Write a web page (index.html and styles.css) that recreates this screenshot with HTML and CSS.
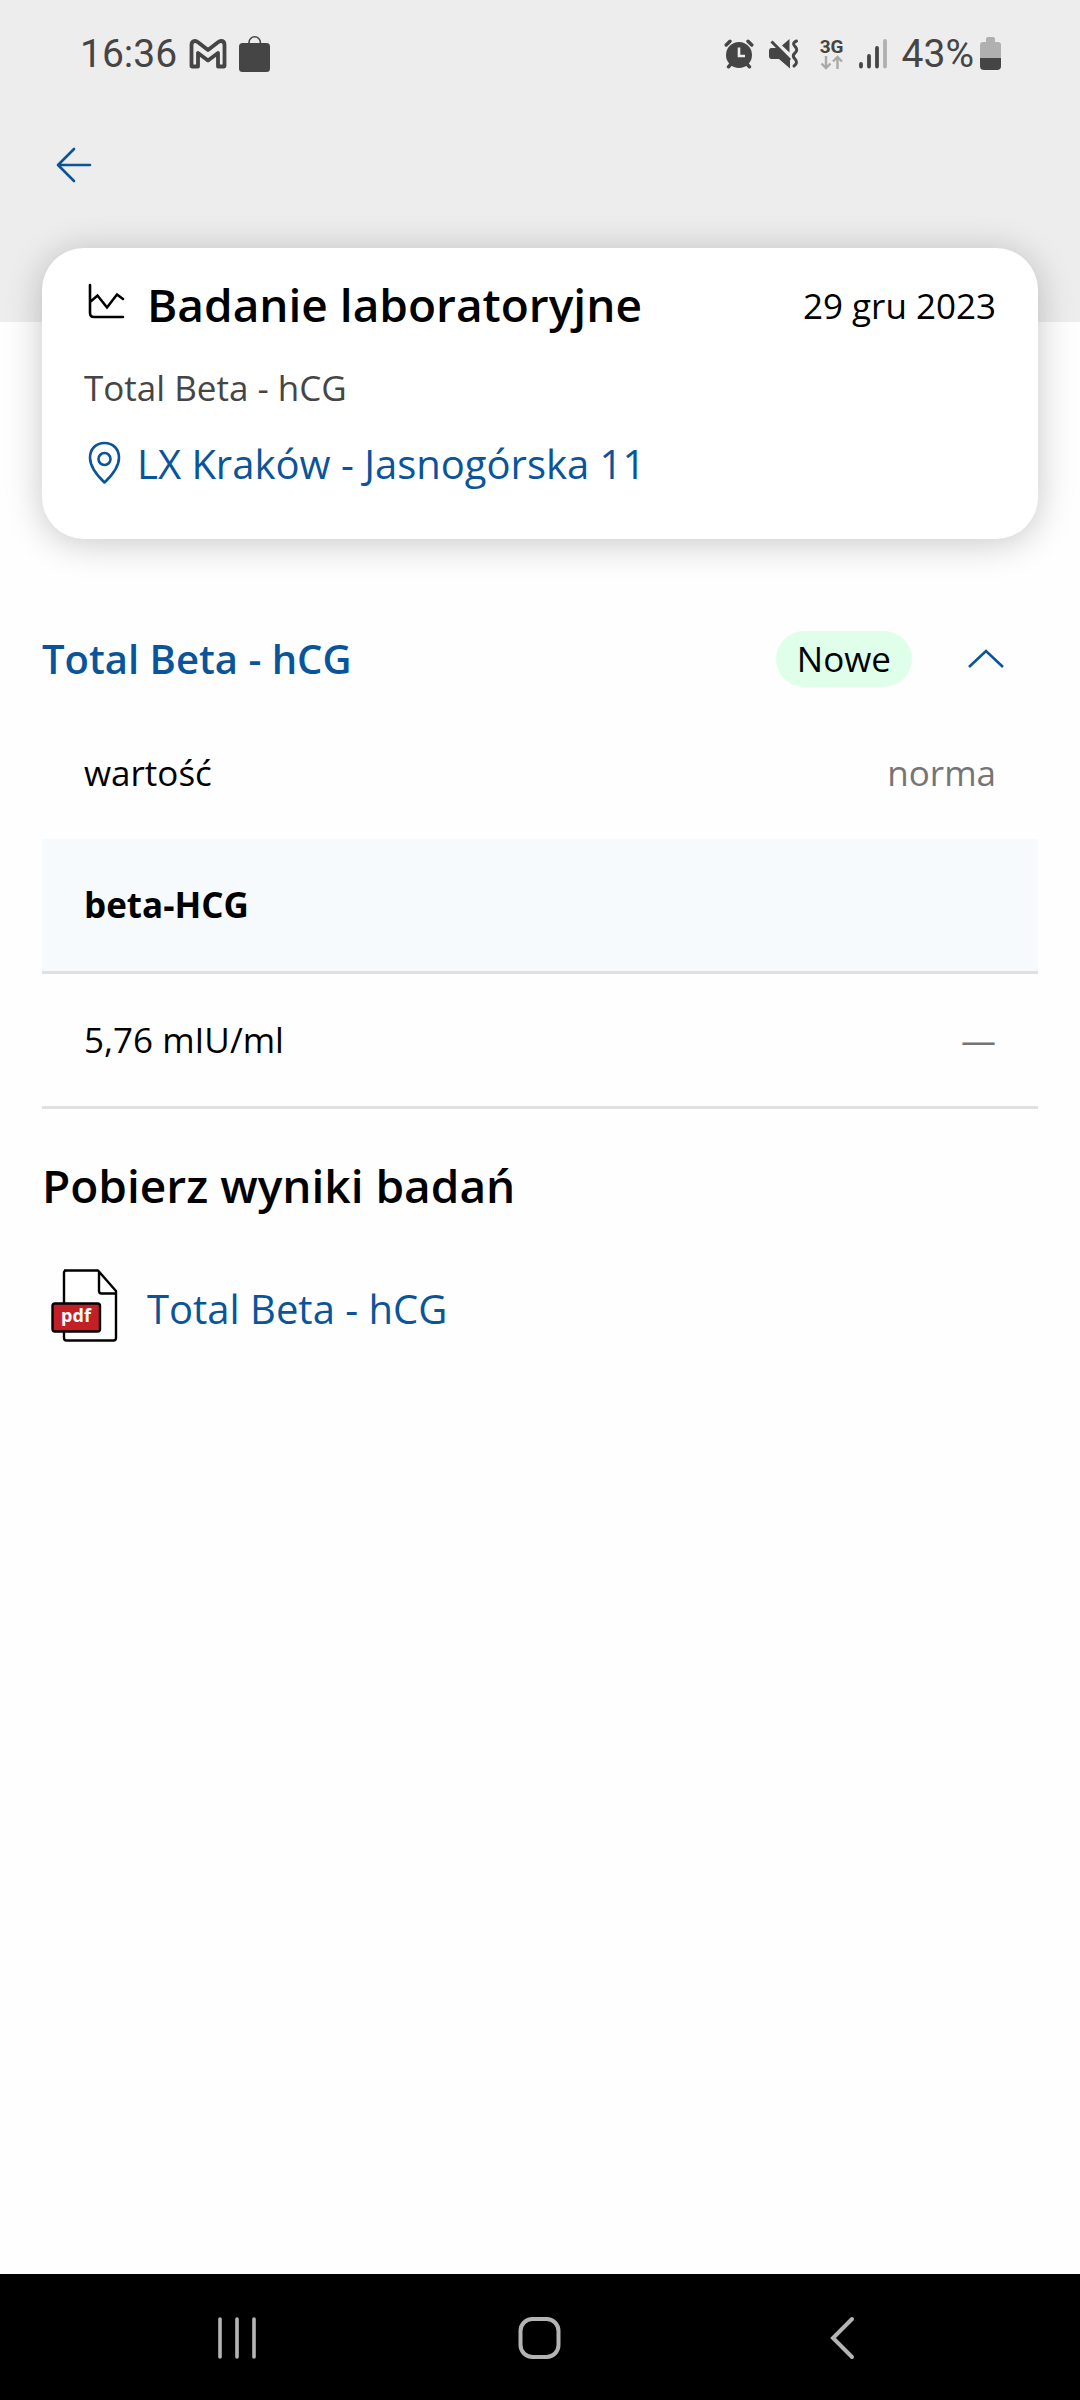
FILE: index.html
```html
<!DOCTYPE html>
<html lang="pl">
<head>
<meta charset="utf-8">
<meta name="viewport" content="width=device-width, initial-scale=1">
<title>Badanie laboratoryjne</title>
<link rel="stylesheet" href="styles.css">
</head>
<body>
<header class="top">
  <div class="status">
    <div class="status-left">
      <span class="status-text">16:36</span>
      <svg class="gmail" width="38" height="30" viewBox="0 0 38 30" aria-hidden="true"><path d="M2.500 27V6Q2.500 2 6 2Q7.500 2 9 3.200L19 11L29 3.200Q30.500 2 32 2Q35.500 2 35.500 6V27Q35.500 27.500 35 27.500H29V14L19 21.500L9 14V27.500H3Q2.500 27.500 2.500 27Z" fill="none" stroke="#454545" stroke-width="3.800" stroke-linejoin="round"/></svg>
      <svg width="32" height="36" viewBox="0 0 32 36" aria-hidden="true"><rect x="0" y="7" width="31" height="29" rx="3.500" fill="#454545"/><path d="M10 8V6.500a5.700 5.700 0 0 1 11.400 0V8" fill="none" stroke="#454545" stroke-width="1.600"/></svg>
    </div>
    <div class="status-right">
      <svg width="30" height="30" viewBox="0 0 30 30" aria-hidden="true"><g fill="none" stroke="#454545" stroke-width="3.400" stroke-linecap="round"><path d="M2.200 6L6 2.200M24 2.200L27.800 6M7 25L4.500 27.800M23 25L25.500 27.800"/></g><circle cx="15" cy="16" r="13" fill="#454545"/><path d="M15 8.500V17H21" fill="none" stroke="#ededed" stroke-width="2.600"/></svg>
      <svg width="30" height="30" viewBox="0 0 30 30" aria-hidden="true"><g fill="#454545"><path d="M13 6.500L20.500 0V13.500Z"/><path d="M2.500 9H8L21 21.500V29.500L10 20H2.500Q0 20 0 17V12Q0 9 2.500 9Z"/></g><path d="M2.500 2.500L21 21" stroke="#454545" stroke-width="3" fill="none"/><path d="M27.500 2Q22.500 4 26 7.500Q29.500 10.500 26 14Q22.500 17 26 20Q29.500 23.500 25 27" fill="none" stroke="#454545" stroke-width="3" stroke-linecap="round"/></svg>
      <span class="network">3G
        <svg width="24" height="15" viewBox="0 0 24 15" aria-hidden="true"><path d="M6 1V13M1.500 8.500L6 13L10.500 8.500M17.500 14V2M13 6.500L17.500 2L22 6.500" fill="none" stroke="#a9a9a9" stroke-width="2.400"/></svg>
      </span>
      <svg width="28" height="30" viewBox="0 0 28 30" aria-hidden="true"><g fill="none" stroke="#454545" stroke-width="3.800" stroke-linecap="round"><path d="M2 25V27.500M10 17V27.500M18 9V27.500"/><path d="M26 2V27.500" stroke="#b0b0b0"/></g></svg>
      <span class="status-text battery">43%
        <svg width="22" height="34" viewBox="0 0 22 34" aria-hidden="true"><path d="M0 21V8Q0 5 3 5H6V2Q6 0 8 0H13Q15 0 15 2V5H18Q21 5 21 8V21Z" fill="#b0b0b0"/><path d="M0 21H21V29Q21 33 17 33H4Q0 33 0 29Z" fill="#454545"/></svg>
      </span>
    </div>
  </div>
  <button class="back" type="button" aria-label="Wstecz">
    <svg width="36" height="36" viewBox="0 0 36 36" aria-hidden="true"><path d="M34 18H2M18 2L2 18L18 34" fill="none" stroke="#0a5599" stroke-width="2.600" stroke-linecap="round" stroke-linejoin="round"/></svg>
  </button>
</header>

<main class="content">
  <section class="card">
    <div class="card-head">
      <svg class="chart" width="42" height="42" viewBox="0 0 42 42" aria-hidden="true"><path d="M6 2V30Q6 34 10 34H39M6 19L13.500 12.500L23 24.500L33 11.500L39 16" fill="none" stroke="#000" stroke-width="2.600" stroke-linecap="round"/></svg>
      <h1 class="title">Badanie laboratoryjne</h1>
      <time class="date" datetime="2023-12-29">29 gru 2023</time>
    </div>
    <p class="exam">Total Beta - hCG</p>
    <a class="place" href="#">
      <svg width="42" height="48" viewBox="0 0 42 48" aria-hidden="true"><path d="M20.500 3C11.500 3 6 9.500 6 17.500C6 26 12 34.500 20.500 42.500C29 34.500 35 26 35 17.500C35 9.500 29.500 3 20.500 3Z" fill="none" stroke="#0a5599" stroke-width="2.600" stroke-linejoin="round"/><circle cx="20.500" cy="19" r="6" fill="none" stroke="#0a5599" stroke-width="2.600"/></svg>
      <span>LX Kraków - Jasnogórska 11</span>
    </a>
  </section>

  <section class="results">
    <h2 class="accordion">
      <button class="toggle" type="button" aria-expanded="true">
        <span class="toggle-name">Total Beta - hCG</span>
        <span class="badge">Nowe</span>
        <svg width="36" height="20" viewBox="0 0 36 20" aria-hidden="true"><path d="M1 18L18 2L35 18" fill="none" stroke="#0a5599" stroke-width="2.600"/></svg>
      </button>
    </h2>
    <table class="table">
      <thead>
        <tr><th scope="col">wartość</th><th scope="col" class="norm">norma</th></tr>
      </thead>
      <tbody>
        <tr class="group"><th scope="rowgroup" colspan="2">beta-HCG</th></tr>
        <tr><td>5,76 mIU/ml</td><td class="norm">—</td></tr>
      </tbody>
    </table>
  </section>

  <section class="downloads">
    <h2 class="title">Pobierz wyniki badań</h2>
    <a class="file" href="#">
      <svg width="84" height="80" viewBox="0 0 84 80" aria-hidden="true"><path d="M22 1.500H56L74 22V69Q74 71.500 71.500 71.500H24.500Q22 71.500 22 69V4Q22 1.500 24.500 1.500M57 2V22Q57 24.500 59.500 24.500H74" fill="#fff" stroke="#000" stroke-width="2.400" stroke-linejoin="round"/><rect x="10.500" y="34.500" width="47.500" height="28" rx="2.500" fill="#c22026" stroke="#000" stroke-width="2.400"/><text class="pdf" x="34" y="53" text-anchor="middle">pdf</text></svg>
      <span>Total Beta - hCG</span>
    </a>
  </section>
</main>

<nav class="navbar" aria-label="System">
  <button type="button" aria-label="Ostatnie"><svg width="44" height="44" viewBox="0 0 44 44" aria-hidden="true"><path d="M5 3V41M22 3V41M39 3V41" stroke="#b4b4b4" stroke-width="3.600" stroke-linecap="round"/></svg></button>
  <button type="button" aria-label="Ekran główny"><svg width="44" height="44" viewBox="0 0 44 44" aria-hidden="true"><rect x="2.500" y="3" width="38" height="38" rx="12" fill="none" stroke="#b4b4b4" stroke-width="4"/></svg></button>
  <button type="button" aria-label="Wstecz"><svg width="44" height="44" viewBox="0 0 44 44" aria-hidden="true"><path d="M31 3L12 22L31 41" fill="none" stroke="#b4b4b4" stroke-width="4" stroke-linecap="round"/></svg></button>
</nav>
</body>
</html>
```

FILE: styles.css
```css
* {
  box-sizing: border-box;
}

body {
  margin: 0;
  min-height: 100vh;
  display: flex;
  flex-direction: column;
  background: #fefefe;
  color: #000;
  font: 35px/48px "Open Sans", "Noto Sans", sans-serif;
}

h1, h2, p {
  margin: 0;
}

svg {
  display: block;
  flex: none;
}

a {
  color: #0a5599;
  text-decoration: none;
}

button {
  padding: 0;
  border: 0;
  background: none;
  font: inherit;
  color: inherit;
  cursor: pointer;
}

/* Grey header with the system status row */
.top {
  background: #ededed;
  padding-bottom: 100px;
}

.status {
  display: flex;
  justify-content: space-between;
  align-items: center;
  height: 108px;
  padding: 0 78px 0 80px;
}

.status-left,
.status-right {
  display: flex;
  align-items: center;
  gap: 15px;
  color: #454545;
}

.status-left {
  gap: 12px;
}

.status-text {
  font: 39px/48px Roboto, sans-serif;
}

.battery {
  display: flex;
  align-items: center;
  gap: 6px;
}

.network {
  display: flex;
  flex-direction: column;
  align-items: center;
  width: 24px;
  margin-left: 6px;
  font: bold 19px/17px Roboto, sans-serif;
}

.back {
  display: flex;
  align-items: center;
  height: 114px;
  padding: 0 56px;
}

/* Page body */
.content {
  flex: 1;
  margin-top: -74px;
  padding: 0 42px 48px;
}

.card {
  padding: 26px 42px 47px;
  border-radius: 42px;
  background: #fff;
  box-shadow: 0 4px 36px rgba(0, 0, 0, 0.22);
}

.card-head {
  display: flex;
  align-items: flex-end;
  margin-bottom: 30px;
}

.chart {
  align-self: center;
  margin-right: 21px;
}

.title {
  font-size: 46px;
  line-height: 60px;
  font-weight: 600;
}

.date {
  margin-left: auto;
  line-height: 56px;
}

.exam {
  margin-bottom: 24px;
  color: #454545;
}

.place,
.file {
  display: flex;
  align-items: center;
  font-size: 40px;
  line-height: 56px;
}

.place {
  gap: 11px;
}

.results {
  margin-top: 92px;
}

.accordion {
  font-size: 40px;
  line-height: 56px;
  font-weight: 600;
}

.toggle {
  display: flex;
  align-items: center;
  width: 100%;
  padding-right: 34px;
  text-align: left;
}

.toggle-name {
  flex: 1;
  color: #0a5599;
}

.badge {
  margin-right: 56px;
  padding: 0 21px;
  border-radius: 28px;
  background: #e0ffeb;
  font-size: 35px;
  font-weight: 400;
}

.table {
  width: 100%;
  border-collapse: separate;
  border-spacing: 0;
}

.table th,
.table td {
  padding: 42px;
  text-align: left;
  font-weight: 400;
}

.table thead th {
  padding-top: 62px;
}

.table tbody th,
.table tbody td {
  border-bottom: 3px solid #dfe0e1;
}

.table .group th {
  background: #f6fafd;
  font-weight: 700;
}

.table .norm {
  text-align: right;
  color: #757575;
}

.downloads {
  margin-top: 46px;
}

.file {
  margin-top: 54px;
  gap: 21px;
}

.pdf {
  font: bold 18px "Open Sans", sans-serif;
  fill: #fff;
}

/* System navigation */
.navbar {
  display: flex;
  height: 126px;
  padding: 2px 86px 0;
  background: #000;
}

.navbar button {
  flex: 1;
  display: flex;
  align-items: center;
  justify-content: center;
}
```
